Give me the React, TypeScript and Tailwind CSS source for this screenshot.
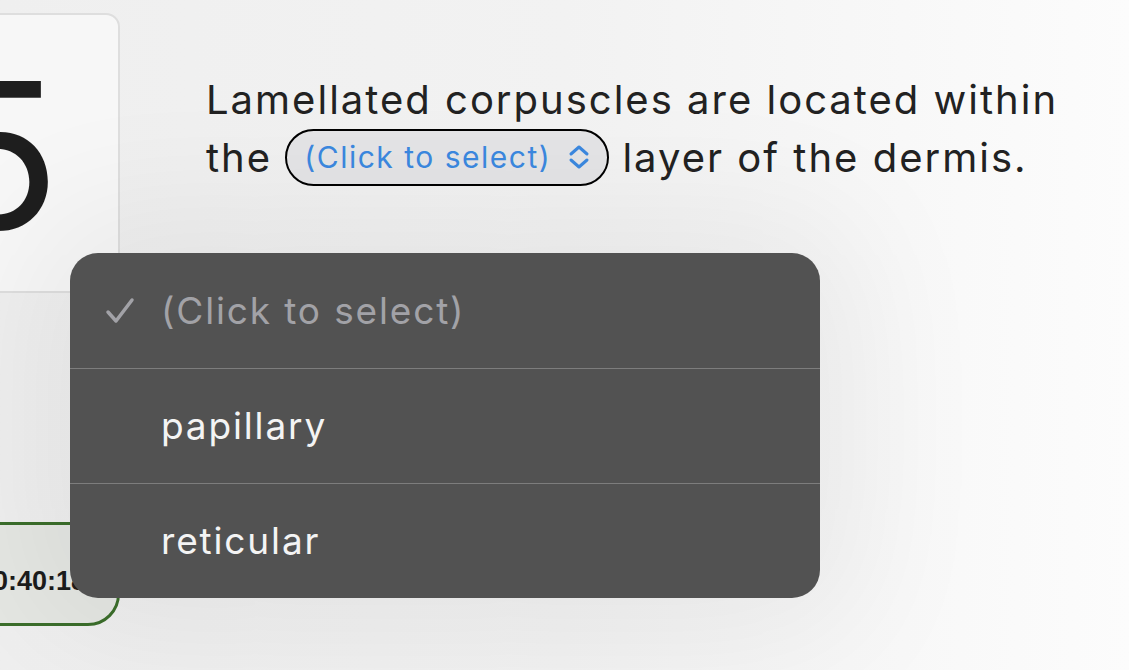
import React from 'react';

const options = [
    { label: '(Click to select)', selected: true },
    { label: 'papillary', selected: false },
    { label: 'reticular', selected: false },
];

const Chevrons: React.FC = () => (
    <svg width="22" height="26" viewBox="0 0 22 26" fill="none" stroke="#3b88df" strokeWidth="3" strokeLinecap="round" strokeLinejoin="round">
        <path d="M3 10 L11 3 L19 10" />
        <path d="M3 16 L11 23 L19 16" />
    </svg>
);

const Check: React.FC = () => (
    <svg width="30" height="28" viewBox="0 0 30 28" fill="none" stroke="#a2a2a7" strokeWidth="3.5" strokeLinecap="round" strokeLinejoin="round">
        <path d="M3 15 L11 24 L27 3" />
    </svg>
);

export default function App() {
    return (
        <div
            className="relative w-[1129px] h-[670px] overflow-hidden bg-gradient-to-r from-[#efefef] via-[#f2f2f2] to-[#fcfcfc]"
            style={{ fontFamily: 'Inter, "Open Sans", "Liberation Sans", sans-serif' }}
        >
            <div className="flex h-full">
                {/* left column: question number + timer */}
                <div className="flex flex-col w-[200px] ml-[-80px] shrink-0">
                    <div className="mt-[13px] h-[280px] rounded-[14px] border-2 border-[#dedede] bg-[#f7f7f7] flex items-center justify-end pr-[58px]">
                        <span className="text-[204px] leading-none font-normal text-[#1e1e1e] mt-[4px]">5</span>
                    </div>
                    <div className="mt-[229px] h-[104px] rounded-r-[32px] border-[3px] border-[#3b6e2b] bg-[#e5e7e3] flex items-center pl-[70px] overflow-hidden">
                        <span className="text-[27px] font-bold text-[#1c1c1c] mt-[14px] whitespace-nowrap" style={{ fontFamily: '"Liberation Sans", Arial, sans-serif' }}>0:40:18</span>
                    </div>
                </div>

                {/* question */}
                <div className="ml-[86px] mt-[71px] w-[900px]">
                    <p className="text-[40px] leading-[58px] text-[#222222] tracking-[0.05em]">
                        Lamellated corpuscles are located within
                        <br />
                        the{' '}
                        <span className="inline-flex items-center gap-[17px] align-middle h-[57px] pl-[17px] pr-[17px] rounded-full border-[2.5px] border-black bg-[#e4e4e6] mt-[-8px] tracking-normal">
                            <span className="text-[30px] text-[#3b88df] leading-none tracking-[0.05em]">(Click to select)</span>
                            <Chevrons />
                        </span>{' '}
                        layer of the dermis.
                    </p>
                </div>
            </div>

            {/* open dropdown menu */}
            <div className="absolute left-[70px] top-[253px] w-[750px] rounded-[28px] bg-[#525252] overflow-hidden shadow-[0_0_140px_40px_rgba(0,0,0,0.06)]">
                {options.map((opt, idx) => (
                    <div
                        key={opt.label}
                        className={`h-[115px] flex items-center ${idx > 0 ? 'border-t border-[#7d7d7d]' : ''}`}
                    >
                        <div className="w-[91px] pl-[35px] flex items-center">
                            {opt.selected && <Check />}
                        </div>
                        <span className={`text-[37px] tracking-[0.05em] ${opt.selected ? 'text-[#a2a2a7]' : 'text-[#f4f4f4]'}`}>
                            {opt.label}
                        </span>
                    </div>
                ))}
            </div>
        </div>
    );
}
